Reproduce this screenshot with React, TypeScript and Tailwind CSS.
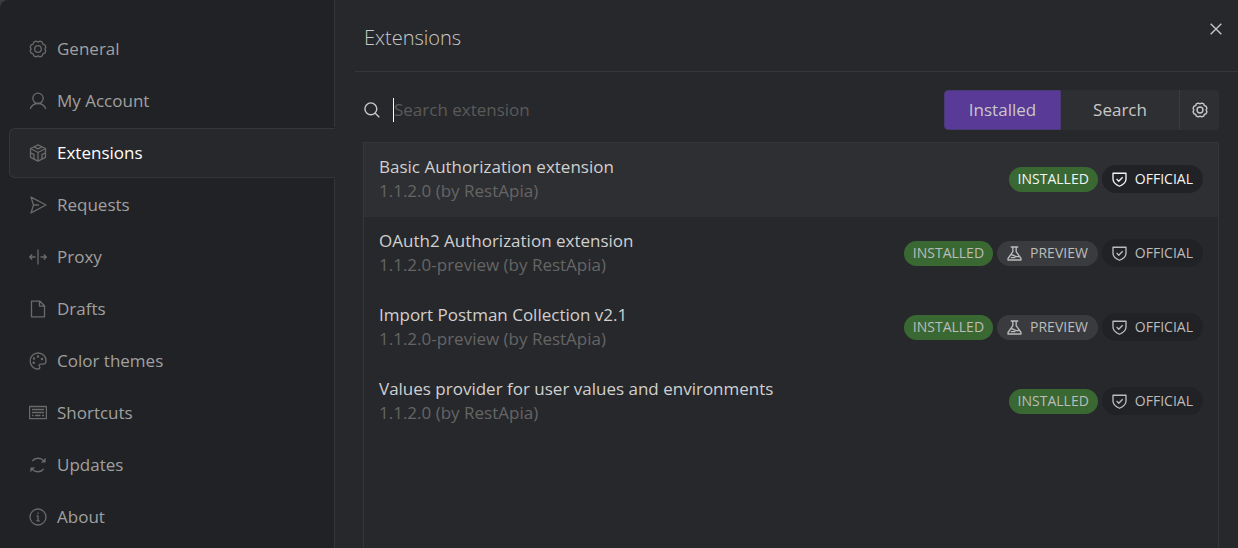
import { ReactNode, useState } from "react";

type IconName =
  | "gear"
  | "user"
  | "cube"
  | "send"
  | "split"
  | "file"
  | "palette"
  | "keyboard"
  | "refresh"
  | "info"
  | "search"
  | "close"
  | "flask"
  | "shield";

const ICONS: Record<IconName, ReactNode> = {
  gear: (
    <>
      <path d="m15.9 9 .9 1.9-1 2.3-1.9.7-.7 1.9-2.3 1L9 15.9l-1.9.9-2.3-1-.7-1.9-1.9-.7-1-2.3L2.1 9l-.9-1.9 1-2.3 1.9-.7.7-1.9 2.3-1L9 2.1l1.9-.9 2.3 1 .7 1.9 1.9.7 1 2.3z" />
      <circle cx="9" cy="9" r="3.3" />
    </>
  ),
  user: (
    <>
      <circle cx="9" cy="6.3" r="5.2" />
      <path d="M1.2 17c1.3-3.4 4.3-5.5 7.8-5.5s6.5 2.1 7.8 5.5" />
    </>
  ),
  cube: (
    <>
      <path d="m9 .9 7.5 3.6v8.8L9 17.2l-7.5-3.9V4.5z" />
      <path d="M1.5 4.5 9 8.5l7.5-4M9 8.5v8.7M5 2.9 9 4.8l4-1.9M1.5 8.8 5 10.6v4.5M16.5 8.8 13 10.6v4.5" />
    </>
  ),
  send: <path d="M2 1.1 17 9 2 16.9 4.5 9zM4.5 9H10" />,
  split: (
    <path d="M9 1.5v15M6.5 9H.7M3.2 6.5.7 9l2.5 2.5M11.5 9h5.8M14.8 6.5 17.3 9l-2.5 2.5" />
  ),
  file: <path d="M2.5 1.2H11l4.5 4.5v11.1h-13zM10.5 1.2v5h5" />,
  palette: (
    <>
      <path d="M1.2 9.5C.8 4.7 4.5 1 9 1c4.7 0 8.2 3.5 8 8-.1 1.9-1.3 3.2-3 3.2h-2.3c-1.6 0-2 1.3-1.2 2.3.8 1.1.2 2.5-1.5 2.5-4.2 0-7.5-3-7.8-7.5z" />
      <circle cx="5" cy="6.5" r=".6" />
      <circle cx="9" cy="4.5" r=".6" />
      <circle cx="13" cy="7" r=".6" />
      <circle cx="4.7" cy="10.7" r=".6" />
    </>
  ),
  keyboard: (
    <>
      <path d="M.6 2.5h16.8v12.1H.6z" />
      <path d="M3 5.5h12M3 8.5h12M3 11.5h1.5M6 11.5h5.5M13 11.5h2" />
    </>
  ),
  refresh: (
    <>
      <path d="M3.3 5C6 1.6 11.5 1.2 14.7 4.6" />
      <path d="M14.7 13C12 16.4 6.5 16.8 3.3 13.4" />
      <path d="M16.6 1.8v4.7h-4.7zM1.4 16.2v-4.7h4.7z" fill="currentColor" stroke="none" />
    </>
  ),
  info: (
    <>
      <circle cx="9" cy="9" r="8" />
      <path d="M7.5 7.8H9v5M7.3 12.8h3.5M9 4.6v1.5" />
    </>
  ),
  search: (
    <>
      <circle cx="7.7" cy="7.7" r="6.7" />
      <path d="m12.6 12.6 4.6 4.6" />
    </>
  ),
  close: <path d="m3 3 12 12M15 3 3 15" />,
  flask: (
    <>
      <path d="M4.5 1.2h9M7 1.2v5.6L1.2 15v1.8h15.6V15L11 6.8V1.2" />
      <path d="M5 10.5c3 0 3.5 2 7 2.2h2.6M4.5 14H10" />
    </>
  ),
  shield: (
    <>
      <path d="M1.2 1.5h15.6v7c0 4.2-3 6.7-7.8 8.6-4.8-1.9-7.8-4.4-7.8-8.6z" />
      <path d="m5.5 8.3 2.6 2.8 4.7-4.9" />
    </>
  ),
};

type IconProps = {
  name: IconName;
  className?: string;
};

function Icon({ name, className = "size-[18px] stroke-[1.3]" }: IconProps) {
  return (
    <svg
      viewBox="0 0 18 18"
      fill="none"
      stroke="currentColor"
      strokeLinejoin="round"
      className={`shrink-0 ${className}`}
      aria-hidden="true"
    >
      {ICONS[name]}
    </svg>
  );
}

const MENU: { label: string; icon: IconName }[] = [
  { label: "General", icon: "gear" },
  { label: "My Account", icon: "user" },
  { label: "Extensions", icon: "cube" },
  { label: "Requests", icon: "send" },
  { label: "Proxy", icon: "split" },
  { label: "Drafts", icon: "file" },
  { label: "Color themes", icon: "palette" },
  { label: "Shortcuts", icon: "keyboard" },
  { label: "Updates", icon: "refresh" },
  { label: "About", icon: "info" },
];

type Extension = {
  name: string;
  version: string;
  preview?: boolean;
};

const EXTENSIONS: Extension[] = [
  { name: "Basic Authorization extension", version: "1.1.2.0" },
  { name: "OAuth2 Authorization extension", version: "1.1.2.0-preview", preview: true },
  { name: "Import Postman Collection v2.1", version: "1.1.2.0-preview", preview: true },
  { name: "Values provider for user values and environments", version: "1.1.2.0" },
];

function Sidebar() {
  return (
    <nav className="flex w-[335px] shrink-0 flex-col rounded-tl-lg bg-[#212225]">
      <div className="h-[23px] shrink-0 border-r border-[#35363a]" />
      {MENU.map(({ label, icon }) => {
        const active = label === "Extensions";
        return (
          <div
            key={label}
            className={`py-px pl-[9px] ${active ? "" : "border-r border-[#35363a]"}`}
          >
            <a
              href="#"
              aria-current={active ? "page" : undefined}
              className={`flex h-[50px] items-center gap-[10px] rounded-l-md border border-r-0 pl-[19px] text-[17px] ${
                active
                  ? "border-[#35363a] bg-[#27282b] text-white"
                  : "border-transparent text-[#a0a0a0]"
              }`}
            >
              <span className="text-[#6a6a6a]">
                <Icon name={icon} />
              </span>
              {label}
            </a>
          </div>
        );
      })}
      <div className="flex-1 border-r border-[#35363a]" />
    </nav>
  );
}

function ExtensionRow({ item, selected }: { item: Extension; selected: boolean }) {
  return (
    <li
      className={`flex h-[74px] items-center justify-between px-[15px] pb-[2px] ${
        selected ? "bg-[#2e2f32]" : ""
      }`}
    >
      <div className="text-[17px] leading-6">
        <h2 className="text-[#d0d0d0]">{item.name}</h2>
        <p className="text-[#656565]">{item.version} (by RestApia)</p>
      </div>
      <div
        className={`flex items-center gap-1 text-sm ${
          selected ? "text-[#f5f5f5]" : "text-[#bcbcbc]"
        }`}
      >
        <span className="flex h-[25px] items-center rounded-full bg-[#3a6832] px-[9px]">
          INSTALLED
        </span>
        {item.preview && (
          <span className="flex h-[25px] items-center gap-2 rounded-full bg-[#3a3b3f] px-[10px]">
            <Icon name="flask" className="size-[15px] stroke-[1.6]" />
            PREVIEW
          </span>
        )}
        <span className="flex h-7 items-center gap-2 rounded-full bg-[#212225] px-[10px]">
          <Icon name="shield" className="size-[15px] stroke-[1.6]" />
          OFFICIAL
        </span>
      </div>
    </li>
  );
}

export default function App() {
  const [query, setQuery] = useState("");

  return (
    <div className="flex h-screen overflow-hidden bg-[#3c3d40] font-['Open_Sans',sans-serif] text-[#c8c8c8]">
      <Sidebar />
      <main className="flex min-w-0 flex-1 flex-col bg-[#27282b] pl-5">
        <header className="flex h-[72px] shrink-0 items-start justify-between border-b border-[#35363a] pr-[14px] pl-[9px]">
          <h1 className="pt-[22px] text-xl leading-8 font-light">Extensions</h1>
          <button type="button" aria-label="Close" className="mt-[21px]">
            <Icon name="close" className="size-4 stroke-[1.5]" />
          </button>
        </header>

        <div className="flex min-h-0 flex-1 flex-col pt-[18px] pr-[19px] pl-2">
          <div className="flex h-10 shrink-0 items-center">
            <label className="flex flex-1 items-center pl-px">
              <Icon name="search" className="size-4 stroke-[1.6]" />
              <span className="ml-[13px] h-6 w-px bg-white" />
              <input
                type="text"
                aria-label="Search extension"
                placeholder="Search extension"
                value={query}
                onChange={(e) => setQuery(e.target.value)}
                className="min-w-0 flex-1 bg-transparent text-[17px] outline-none placeholder:text-[#5a5a5a]"
              />
            </label>
            <div className="flex h-10 overflow-hidden rounded text-[17px]">
              <button
                type="button"
                className="w-[117px] rounded-l border border-[#4b3a78] bg-[#593a96]"
              >
                Installed
              </button>
              <button type="button" className="w-[118px] bg-[#2e2f32]">
                Search
              </button>
              <button
                type="button"
                aria-label="Settings"
                className="flex w-10 items-center justify-center border-l border-[#3a3b3f] bg-[#2e2f32]"
              >
                <Icon name="gear" className="size-4 stroke-[1.6]" />
              </button>
            </div>
          </div>

          <ul className="mt-3 flex-1 border border-b-0 border-[#35363a]">
            {EXTENSIONS.map((item, i) => (
              <ExtensionRow key={item.name} item={item} selected={i === 0} />
            ))}
          </ul>
        </div>
      </main>
    </div>
  );
}
